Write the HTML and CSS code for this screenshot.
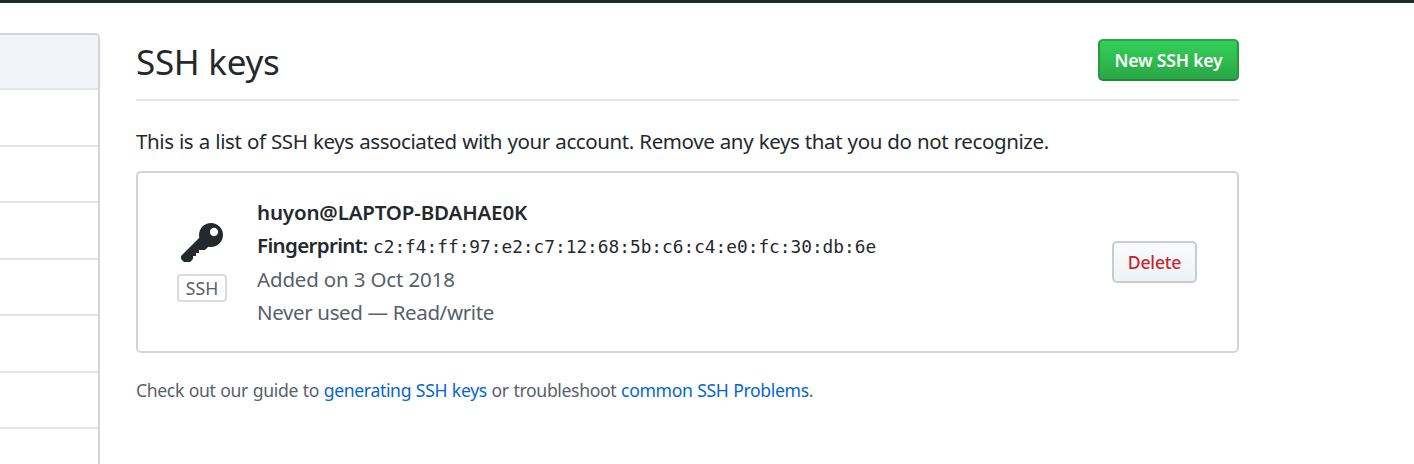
FILE: index.html
```html
<!DOCTYPE html>
<html lang="en">
<head>
<meta charset="utf-8">
<title>SSH keys</title>
<link rel="stylesheet" href="styles.css">
</head>
<body>
<div class="topbar"></div>
<div class="page">
  <nav class="menu">
    <div class="menu-item selected"></div>
    <div class="menu-item tall"></div>
    <div class="menu-item"></div>
    <div class="menu-item tall"></div>
    <div class="menu-item"></div>
    <div class="menu-item tall"></div>
    <div class="menu-item"></div>
  </nav>
  <main class="content">
    <header class="subhead">
      <h2 class="heading">SSH keys</h2>
      <button class="btn btn-primary">New SSH key</button>
    </header>
    <p class="intro">This is a list of SSH keys associated with your account. Remove any keys that you do not recognize.</p>
    <section class="key-box">
      <div class="key-type">
        <svg class="key-icon" viewBox="0 0 14 16" width="42" height="48" aria-hidden="true"><path fill-rule="evenodd" d="M12.83 2.17C12.08 1.42 11.14 1.03 10 1c-1.13.03-2.08.42-2.83 1.17S6.04 3.86 6.01 5c0 .3.03.59.09.89L0 12v1l1 1h2l1-1v-1h1v-1h1v-1h2l1.09-1.11c.3.08.59.11.91.11 1.14-.03 2.08-.42 2.83-1.17S13.97 6.14 14 5c-.03-1.14-.42-2.08-1.17-2.83zM11 5.38c-.77 0-1.38-.61-1.38-1.38 0-.77.61-1.38 1.38-1.38.77 0 1.38.61 1.38 1.38 0 .77-.61 1.38-1.38 1.38z"/></svg>
        <span class="label">SSH</span>
      </div>
      <div class="key-info">
        <div class="line"><strong class="key-name">huyon@LAPTOP-BDAHAE0K</strong></div>
        <div class="line"><strong class="key-print">Fingerprint:</strong><code>c2:f4:ff:97:e2:c7:12:68:5b:c6:c4:e0:fc:30:db:6e</code></div>
        <div class="line muted added">Added on 3 Oct 2018</div>
        <div class="line muted used">Never used — Read/write</div>
      </div>
      <button class="btn btn-danger">Delete</button>
    </section>
    <p class="note">Check out our guide to <a>generating SSH keys</a> or troubleshoot <a>common SSH Problems</a>.</p>
  </main>
</div>
</body>
</html>
```
FILE: styles.css
```css
* { box-sizing: border-box; }
body {
  margin: 0;
  height: 464px;
  overflow: hidden;
  background: #fff;
  color: #24292e;
  font: 20.5px/33.4px "Noto Sans", "Open Sans", sans-serif;
  white-space: nowrap;
}
.topbar { height: 3px; background: #24292e; }
.page { display: flex; align-items: flex-start; }
.menu {
  width: 100px;
  flex: none;
  height: 431px;
  margin-top: 30px;
  border: 2px solid #d1d5da;
  border-left: 0;
  border-bottom: 0;
  border-radius: 0 5px 0 0;
}
.menu-item { height: 56px; border-bottom: 2px solid #e1e4e8; }
.menu-item.tall { height: 57px; }
.menu-item.selected { height: 55px; background: #f3f4f9; border-top-right-radius: 3px; }
.content { width: 1103px; margin-left: 36px; }
.subhead {
  display: flex;
  justify-content: space-between;
  align-items: flex-start;
  height: 98px;
  padding-top: 36px;
  border-bottom: 2px solid #e1e4e8;
}
.heading { margin: -1px 0 0; font-size: 35px; font-weight: 380; line-height: 48px; letter-spacing: -0.3px; }
.btn {
  flex: none;
  display: flex;
  align-items: center;
  justify-content: center;
  height: 42px;
  padding: 0;
  border: 2px solid #c8cbcf;
  border-radius: 5px;
  font: 600 17.6px/27px "Noto Sans", "Open Sans", sans-serif;
  letter-spacing: -0.2px;
}
.btn-primary {
  width: 141px;
  border-color: #2ea44a #28983f #238636;
  background: linear-gradient(#34d058, #28a745);
  color: #fff;
}
.btn-danger {
  width: 85px;
  background: linear-gradient(#fafbfc, #eff3f6);
  color: #cb2431;
  font-weight: 500;
}
.intro { margin: 24px 0 0; height: 46px; letter-spacing: -0.41px; word-spacing: 0.54px; }
.key-box {
  display: flex;
  align-items: center;
  height: 182px;
  padding: 0 40px 0 39px;
  border: 2px solid #d1d5da;
  border-radius: 5px;
}
.key-type { display: flex; flex-direction: column; align-items: center; width: 50px; padding-bottom: 2px; }
.key-icon { fill: #24292e; }
.label {
  width: 50px;
  height: 28px;
  margin-top: 6px;
  border: 2px solid #dcdcdc;
  border-radius: 4px;
  color: #586069;
  font-size: 17.6px;
  line-height: 25px;
  text-align: center;
}
.key-info { flex: 1; margin-left: 30px; padding-top: 2px; }
.line { display: flex; height: 33.4px; }
.line strong { font-weight: 600; }
.line .key-name { letter-spacing: -0.15px; }
.line .key-print { width: 116px; line-height: 31.4px; letter-spacing: -0.65px; }
.line code { font: 17.8px/33.4px "DejaVu Sans Mono", monospace; }
.muted { color: #586069; }
.added { letter-spacing: -0.16px; }
.used { letter-spacing: -0.36px; }
.note { margin: 21px 0 0; color: #586069; font-size: 17.6px; line-height: 33px; letter-spacing: -0.35px; word-spacing: 0.5px; }
.note a { color: #0366d6; }
```
